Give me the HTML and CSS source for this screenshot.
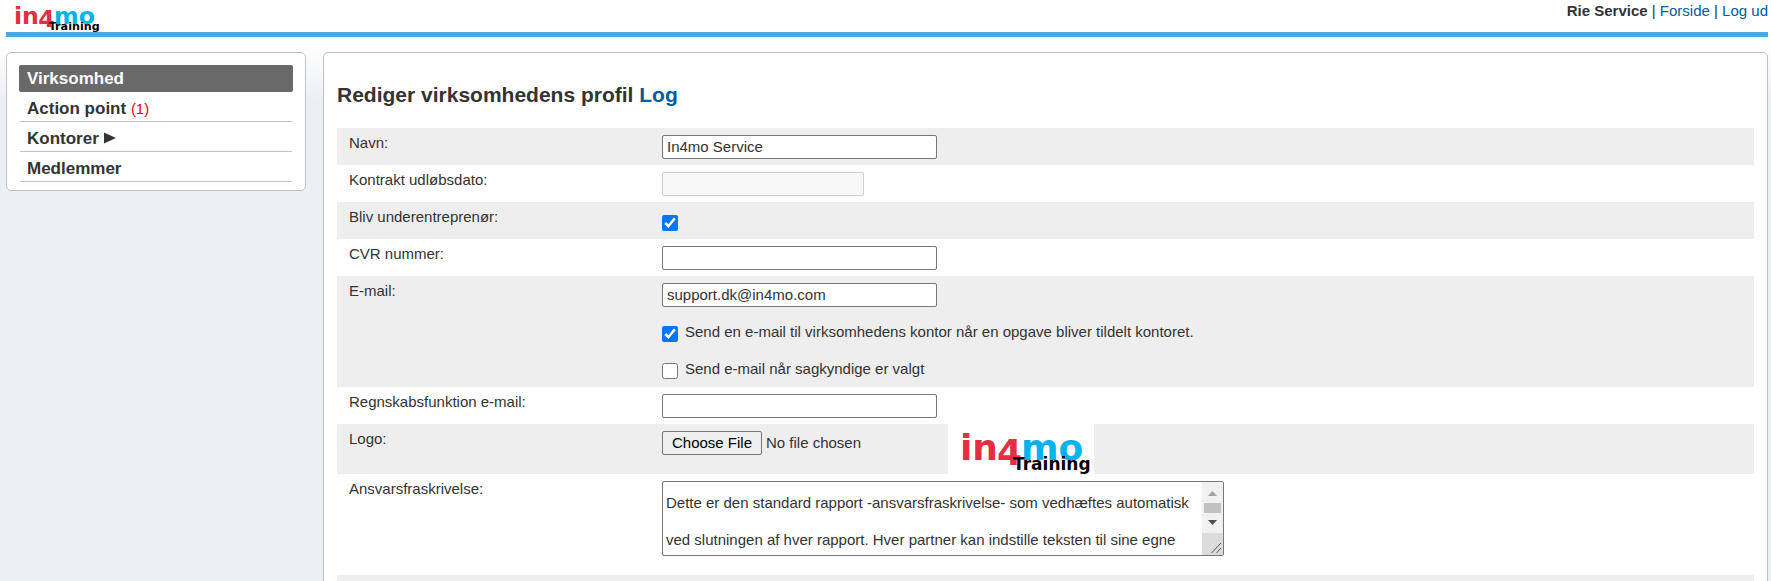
FILE: index.html
```
<!DOCTYPE html>
<html lang="da">
<head>
  <meta charset="UTF-8">
  <title>in4mo - Rediger virksomhedens profil</title>
  <link rel="stylesheet" href="styles.css">
</head>
<body>
  <header id="header">
    <svg class="logo" viewBox="0 0 146 50" role="img" aria-label="in4mo Training">
      <g class="logo-name">
        <text class="red" x="12" y="36">in</text>
        <text class="red" x="49" y="41">4</text>
        <text class="blue" x="73" y="36">mo</text>
      </g>
      <text class="logo-sub" x="65" y="46">Training</text>
    </svg>
    <div id="user-menu">
      <b>Rie Service</b> | <a href="#">Forside</a> | <a href="#">Log ud</a>
    </div>
  </header>

  <div id="page">
    <nav id="sidebar" class="box">
      <a href="#" class="active">Virksomhed</a>
      <a href="#">Action point <span class="count">(1)</span></a>
      <a href="#">Kontorer <svg class="arrow" viewBox="0 0 12 12"><path d="M0 0.5L12 6L0 11.5Z"/></svg></a>
      <a href="#">Medlemmer</a>
    </nav>

    <main id="content" class="box">
      <h1>Rediger virksomhedens profil <a href="#">Log</a></h1>
      <form>
        <div class="row">
          <label for="name">Navn:</label>
          <div class="field"><input type="text" id="name" value="In4mo Service"></div>
        </div>
        <div class="row">
          <label for="expires">Kontrakt udløbsdato:</label>
          <div class="field"><input type="text" id="expires" class="short" disabled></div>
        </div>
        <div class="row">
          <label for="sub">Bliv underentreprenør:</label>
          <div class="field"><div class="check"><input type="checkbox" id="sub" checked></div></div>
        </div>
        <div class="row">
          <label for="cvr">CVR nummer:</label>
          <div class="field"><input type="text" id="cvr"></div>
        </div>
        <div class="row">
          <label for="email">E-mail:</label>
          <div class="field">
            <input type="text" id="email" value="support.dk@in4mo.com">
            <div class="check">
              <input type="checkbox" id="send-office" checked>
              <label for="send-office">Send en e-mail til virksomhedens kontor når en opgave bliver tildelt kontoret.</label>
            </div>
            <div class="check">
              <input type="checkbox" id="send-expert">
              <label for="send-expert">Send e-mail når sagkyndige er valgt</label>
            </div>
          </div>
        </div>
        <div class="row">
          <label for="account-email">Regnskabsfunktion e-mail:</label>
          <div class="field"><input type="text" id="account-email"></div>
        </div>
        <div class="row">
          <label for="logo-file">Logo:</label>
          <div class="field logo-field">
            <input type="file" id="logo-file">
            <svg class="logo" viewBox="0 0 146 50" role="img" aria-label="in4mo Training">
              <g class="logo-name">
                <text class="red" x="12" y="36">in</text>
                <text class="red" x="49" y="41">4</text>
                <text class="blue" x="73" y="36">mo</text>
              </g>
              <text class="logo-sub" x="65" y="46">Training</text>
            </svg>
          </div>
        </div>
        <div class="row">
          <label for="disclaimer">Ansvarsfraskrivelse:</label>
          <div class="field area-field">
            <div class="area">
              <textarea id="disclaimer">Dette er den standard rapport -ansvarsfraskrivelse- som vedhæftes automatisk ved slutningen af hver rapport. Hver partner kan indstille teksten til sine egne</textarea>
              <svg class="scrollbar" viewBox="0 0 21 73">
                <rect width="21" height="73" fill="#f1f1f1"/>
                <path d="M6 14L10.500 9L15 14Z" fill="#a3a3a3"/>
                <rect x="2" y="21" width="17" height="10" fill="#c1c1c1"/>
                <path d="M6 38L10.500 43L15 38Z" fill="#505050"/>
                <rect y="51" width="21" height="22" fill="#dcdcdc"/>
                <path d="M9.500 71L19 61M14.500 71L19 66" stroke="#555"/>
              </svg>
            </div>
          </div>
        </div>
        <div class="row last"></div>
      </form>
    </main>
  </div>
</body>
</html>
```
FILE: styles.css
```
* {
  box-sizing: border-box;
}
html {
  background: #eceff4;
}
body {
  margin: 0;
  padding: 0 3px 0 6px;
  font-family: "Liberation Sans", Arial, sans-serif;
  font-size: 15px;
  line-height: 20px;
  color: #333;
  background: linear-gradient(#fff 45px, #eceff4 100px);
}
a {
  color: #005b9f;
  text-decoration: none;
}

#header {
  display: flex;
  justify-content: space-between;
  height: 37px;
  border-bottom: 5px solid #4baadc;
}
#header .logo {
  width: 96px;
  height: 33px;
}
#user-menu {
  padding-top: 1px;
}

/* logo */
.logo text {
  font-family: "DejaVu Sans", Verdana, sans-serif;
  font-weight: bold;
}
.logo-name {
  font-size: 36px;
}
.logo .logo-sub {
  font-size: 17px;
}
.red {
  fill: #e62e43;
}
.blue {
  fill: #00b4eb;
}

#page {
  display: flex;
  align-items: flex-start;
  gap: 17px;
  margin-top: 15px;
}
.box {
  background: #fff;
  border: 1px solid #c0c0c0;
  border-radius: 5px;
}

#sidebar {
  width: 300px;
  padding: 12px 12px 8px;
}
#sidebar a {
  display: block;
  height: 30px;
  padding: 5px 7px 0;
  margin: 0 1px;
  border-bottom: 1px solid #c0c0c0;
  font-size: 17px;
  line-height: 24px;
  font-weight: bold;
  color: #333;
}
#sidebar a.active {
  height: 27px;
  margin: 0;
  padding: 2px 8px 0;
  border: 0;
  border-radius: 2px;
  background: #696969;
  color: #fff;
}
#sidebar .count {
  font-weight: normal;
  font-size: 15px;
  color: red;
}
.arrow {
  width: 12px;
  height: 12px;
  fill: #333;
}

#content {
  flex: 1;
  padding: 28px 13px 0;
}
h1 {
  margin: 0 0 19px;
  font-size: 21px;
  line-height: 28px;
}

/* form rows */
.row {
  display: flex;
  min-height: 37px;
}
.row:nth-child(odd) {
  background: #eee;
}
.row > label {
  width: 325px;
  padding: 5px 12px;
}
.field {
  flex: 1;
  padding: 7px 0 6px;
}
input, textarea {
  display: block;
  margin: 0;
  font-family: inherit;
  font-size: 15px;
  color: #333;
}
input[type="text"] {
  width: 275px;
  height: 24px;
  padding: 0 4px 1px;
  border: 1px solid #767676;
  border-radius: 2px;
  background: #fff;
}
input[type="text"].short {
  width: 202px;
}
input[type="text"]:disabled {
  background: #f8f8f8;
  border-color: #d0d0d0;
}
input[type="checkbox"] {
  width: 16px;
  height: 16px;
  margin-top: 6px;
}
.check {
  display: flex;
  gap: 7px;
  height: 24px;
}
.field > input + .check, .check + .check {
  margin-top: 13px;
}
.check label {
  padding-top: 2px;
}

.logo-field {
  display: flex;
  padding: 0;
}
.logo-field input {
  width: 286px;
  margin-top: 7px;
}
.logo-field .logo {
  width: 146px;
  height: 50px;
  background: #fff;
}
input::file-selector-button {
  width: 100px;
  height: 24px;
  margin-right: 4px;
  padding: 0 0 1px;
  border: 1px solid #767676;
  border-radius: 2px;
  background: #efefef;
  font-family: inherit;
  font-size: 15px;
  color: #000;
}

.area-field {
  padding-bottom: 19px;
}
.area {
  position: relative;
  width: 562px;
}
textarea {
  width: 100%;
  height: 75px;
  padding: 2px 24px 2px 3px;
  border: 1px solid #767676;
  border-radius: 2px;
  line-height: 37px;
  resize: none;
  overflow: hidden;
}
/* scrollbar lies over the right edge of the textarea */
.scrollbar {
  position: absolute;
  top: 1px;
  right: 1px;
  width: 21px;
  height: 73px;
}
```
